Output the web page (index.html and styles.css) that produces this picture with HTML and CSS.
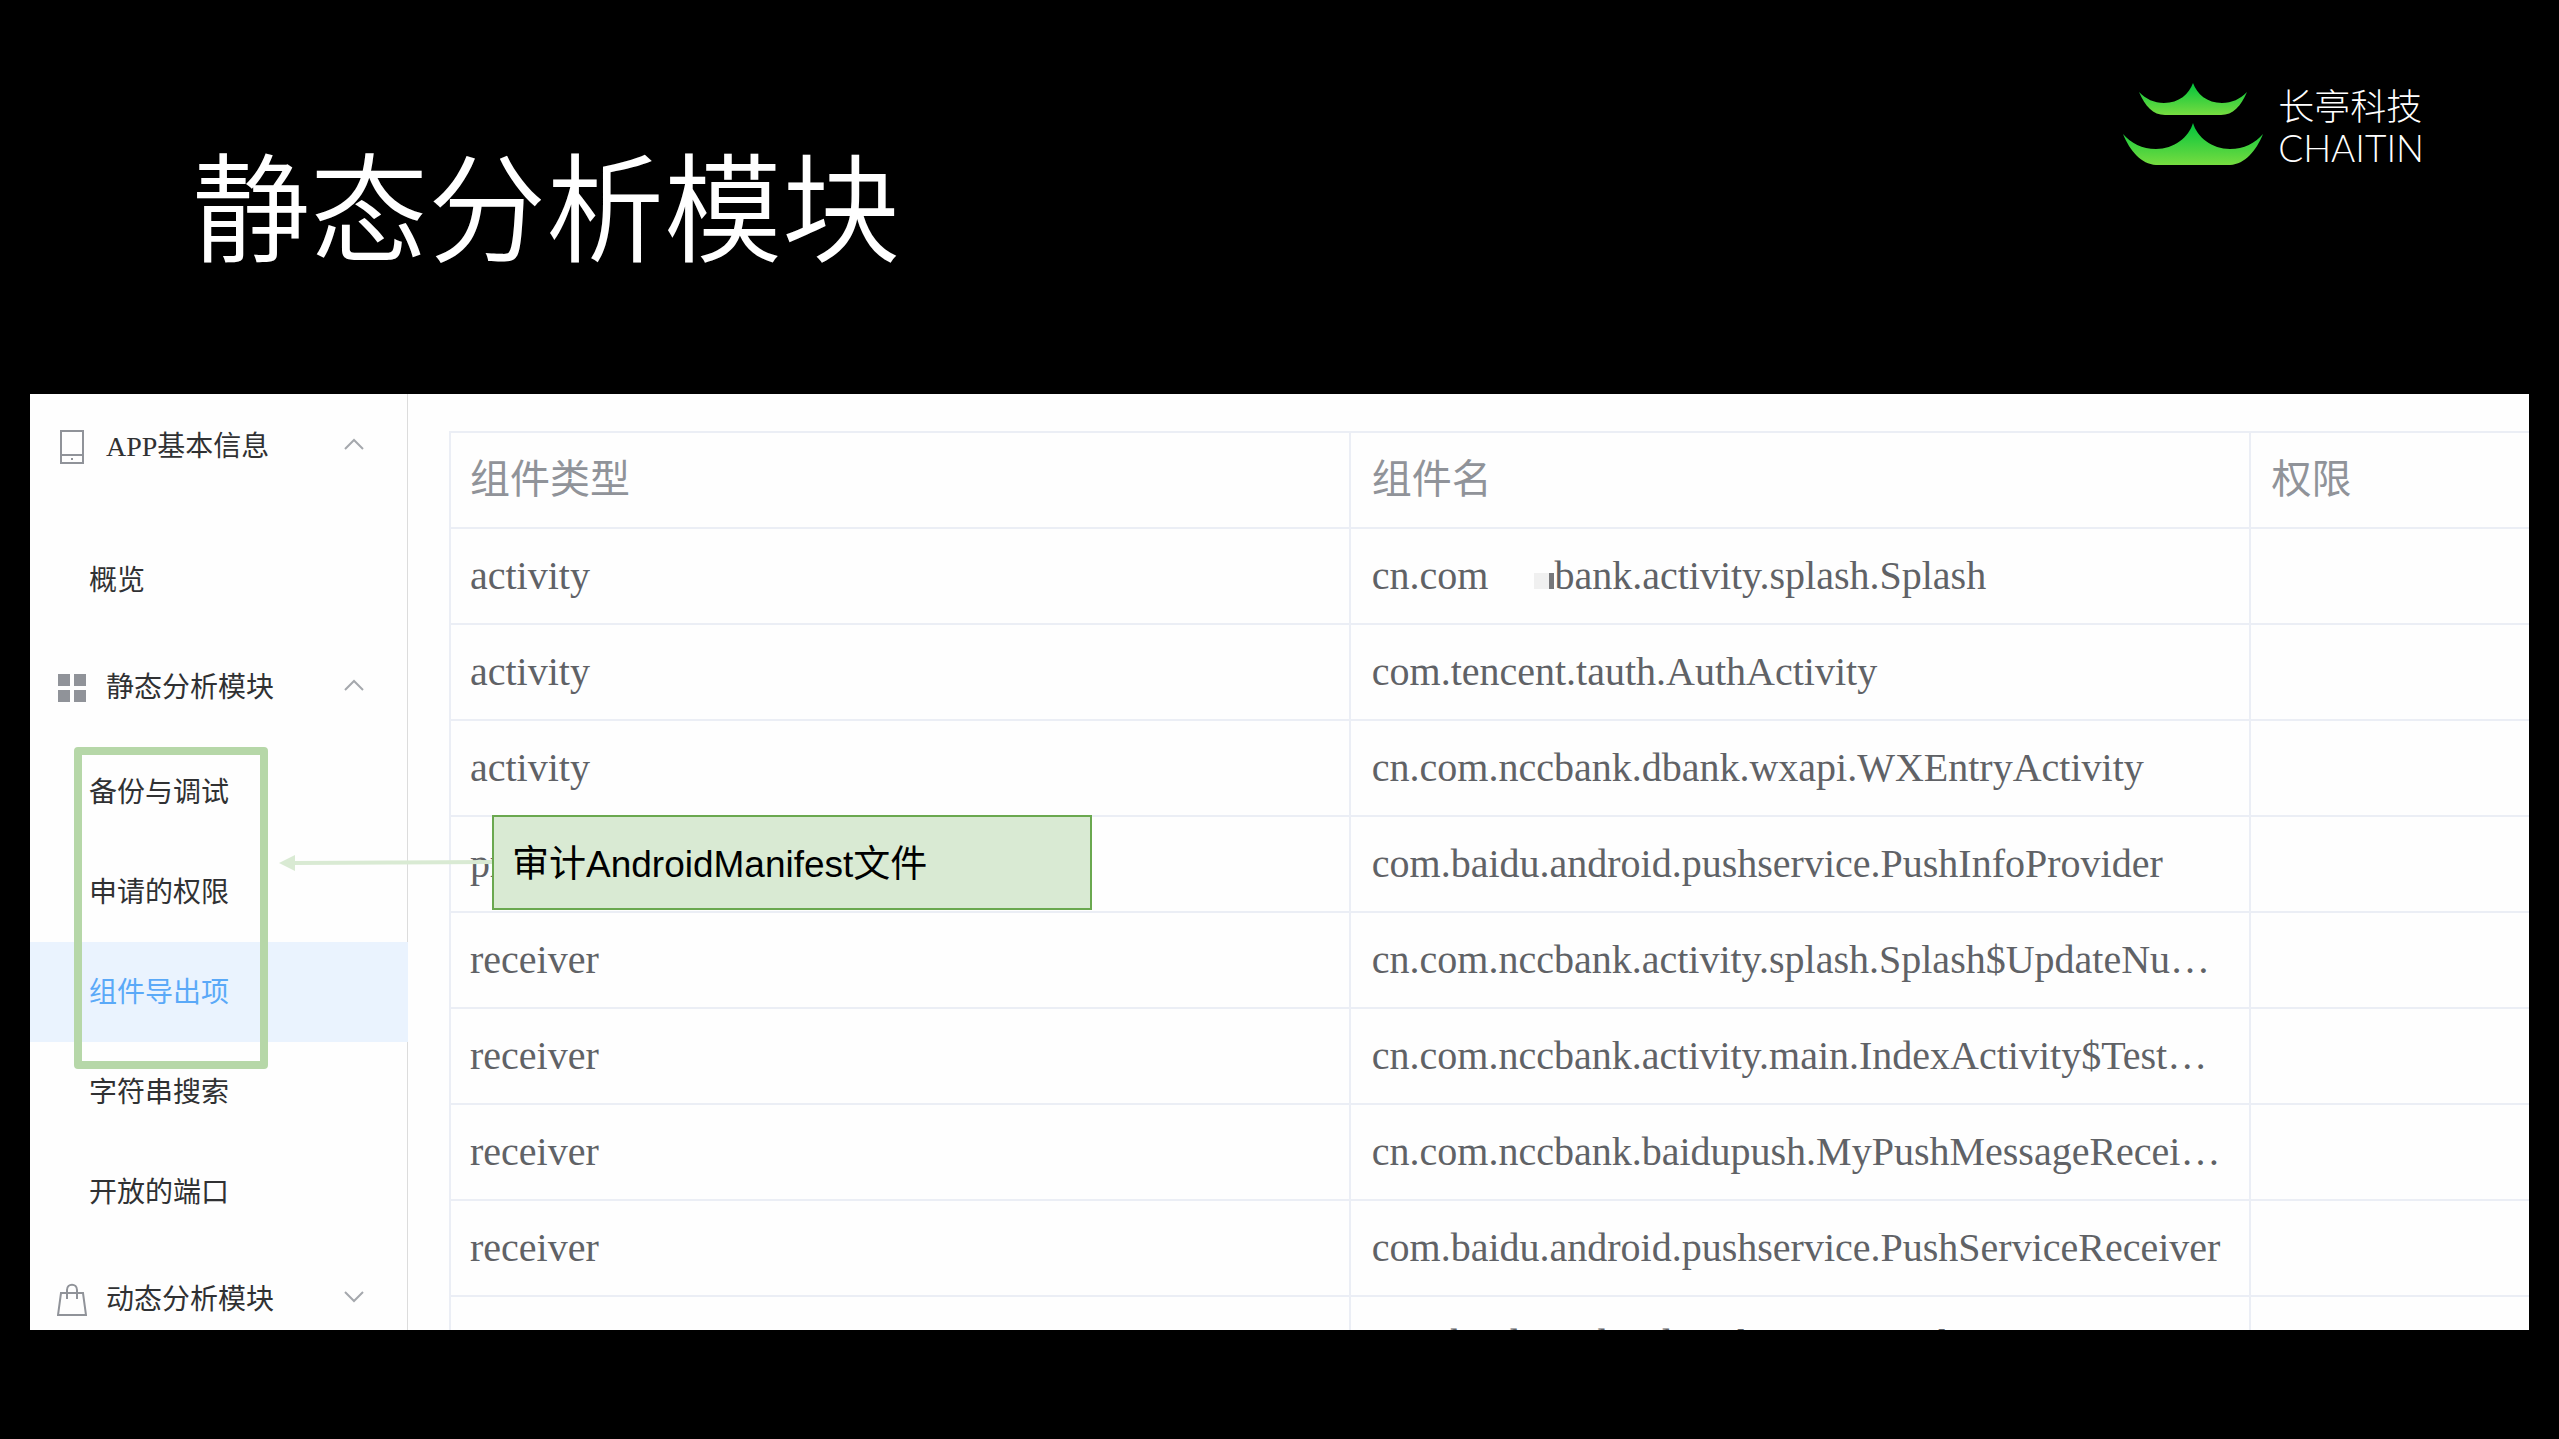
FILE: index.html
```html
<!DOCTYPE html>
<html lang="zh-CN">
<head>
    <meta charset="UTF-8">
    <meta name="viewport" content="width=device-width, initial-scale=1.0">
    <title>静态分析模块</title>
    <link rel="stylesheet" href="styles.css">
</head>
<body>
    <header>
        <h1>静态分析模块</h1>
        <div class="logo">
            <svg class="logo-mark" width="142" height="84" viewBox="0 0 142 84">
                <defs>
                    <linearGradient id="roof" x1="0" y1="0" x2="0" y2="1">
                        <stop offset="0" stop-color="#00c43c"/>
                        <stop offset="1" stop-color="#76dc40"/>
                    </linearGradient>
                </defs>
                <path fill="url(#roof)" d="M71 1C67 12 57 21 42 21C32 21 24 17 17 10C23 24 31 33 43 33H99C111 33 119 24 125 10C118 17 110 21 100 21C85 21 75 12 71 1Z"/>
                <path fill="url(#roof)" d="M71 41C67 55 52 67 34 67C20 67 9 61 1 52C8 69 19 82 34 83H108C123 82 134 69 141 52C133 61 122 67 108 67C90 67 75 55 71 41Z"/>
            </svg>
            <div class="logo-text">
                <span class="logo-cn">长亭科技</span>
                <span class="logo-en">CHAITIN</span>
            </div>
        </div>
    </header>

    <main class="panel">
        <nav class="sidebar">
            <button type="button" class="group first">
                <svg class="icon" width="30" height="36" viewBox="0 0 30 36">
                    <path d="M4 2H26V34H4ZM4 26H26M14 30H16"/>
                </svg>
                <span>APP基本信息</span>
                <svg class="chevron" width="20" height="12" viewBox="0 0 20 12"><path d="M1 11L10 2L19 11"/></svg>
            </button>
            <a class="item" href="#">概览</a>

            <button type="button" class="group">
                <svg class="icon" width="30" height="36" viewBox="0 0 30 36">
                    <path class="solid" d="M1 4H13V16H1ZM17 4H29V16H17ZM1 20H13V32H1ZM17 20H29V32H17Z"/>
                </svg>
                <span>静态分析模块</span>
                <svg class="chevron" width="20" height="12" viewBox="0 0 20 12"><path d="M1 11L10 2L19 11"/></svg>
            </button>
            <a class="item" href="#">备份与调试</a>
            <a class="item" href="#">申请的权限</a>
            <a class="item active" href="#">组件导出项</a>
            <a class="item" href="#">字符串搜索</a>
            <a class="item" href="#">开放的端口</a>

            <button type="button" class="group">
                <svg class="icon" width="30" height="36" viewBox="0 0 30 36">
                    <path d="M4 11H26L29 33H1ZM10 17V8C10 1 20 1 20 8V17"/>
                </svg>
                <span>动态分析模块</span>
                <svg class="chevron" width="20" height="12" viewBox="0 0 20 12"><path d="M1 1L10 10L19 1"/></svg>
            </button>
        </nav>

        <section class="content">
            <table>
                <thead>
                    <tr><th>组件类型</th><th>组件名</th><th>权限</th></tr>
                </thead>
                <tbody>
                    <tr><td>activity</td><td>cn.com<span class="smudge"></span>bank.activity.splash.Splash</td><td></td></tr>
                    <tr><td>activity</td><td>com.tencent.tauth.AuthActivity</td><td></td></tr>
                    <tr><td>activity</td><td>cn.com.nccbank.dbank.wxapi.WXEntryActivity</td><td></td></tr>
                    <tr><td>provider</td><td>com.baidu.android.pushservice.PushInfoProvider</td><td></td></tr>
                    <tr><td>receiver</td><td>cn.com.nccbank.activity.splash.Splash$UpdateNu…</td><td></td></tr>
                    <tr><td>receiver</td><td>cn.com.nccbank.activity.main.IndexActivity$Test…</td><td></td></tr>
                    <tr><td>receiver</td><td>cn.com.nccbank.baidupush.MyPushMessageRecei…</td><td></td></tr>
                    <tr><td>receiver</td><td>com.baidu.android.pushservice.PushServiceReceiver</td><td></td></tr>
                    <tr><td>receiver</td><td>com.baidu.android.pushservice.PushServiceReceiver</td><td></td></tr>
                </tbody>
            </table>
        </section>

        <!-- annotations over the panel -->
        <div class="frame"></div>
        <svg class="arrow" width="214" height="16" viewBox="0 0 214 16">
            <path d="M14 8L214 7" stroke="#d9ead3" stroke-width="4"/>
            <path d="M0 8L16 0V16Z" fill="#d9ead3"/>
        </svg>
        <div class="callout">审计AndroidManifest文件</div>
    </main>
</body>
</html>
```
FILE: styles.css
```css
* {
    box-sizing: border-box;
}

body {
    display: flex;
    flex-direction: column;
    height: 100vh;
    margin: 0;
    padding: 0 30px 109px;
    background-color: #000;
    font-family: "Liberation Serif", "Noto Sans CJK SC", serif;
}

header {
    display: flex;
    justify-content: space-between;
    align-items: flex-start;
    flex: none;
    height: 394px;
    padding: 82px 105px 0 162px;
    color: #fff;
}

h1 {
    margin: 34px 0 0;
    font-family: "Noto Sans CJK SC", sans-serif;
    font-size: 118px;
    font-weight: 350;
    line-height: 172px;
}

.logo {
    display: flex;
    gap: 14px;
}

.logo-text {
    display: flex;
    flex-direction: column;
    font-weight: 300;
}

.logo-cn {
    font-family: "Noto Sans CJK SC", sans-serif;
    font-size: 36px;
    line-height: 44px;
}

.logo-en {
    font-family: Lato, sans-serif;
    font-size: 37px;
    line-height: 44px;
}

.panel {
    position: relative;
    display: flex;
    flex: 1;
    min-height: 0;
    overflow: hidden;
    background-color: #fefefe;
}

.sidebar {
    flex: none;
    width: 378px;
    border-right: 1px solid #dcdcdc;
}

.group {
    display: flex;
    align-items: center;
    width: 100%;
    height: 112px;
    padding: 0 43px 2px 27px;
    border: none;
    background: none;
    color: #303133;
    font-family: inherit;
    font-size: 28px;
    text-align: left;
    cursor: pointer;
}

.group.first {
    height: 102px;
    margin-bottom: 34px;
}

.icon {
    margin: 6px 19px 0 0;
    fill: none;
    stroke: #909399;
    stroke-width: 2;
}

.icon .solid {
    fill: #909399;
    stroke: none;
}

.chevron {
    margin-left: auto;
    fill: none;
    stroke: #a5a8ad;
    stroke-width: 2;
}

.item {
    display: block;
    height: 100px;
    padding-left: 59px;
    color: #303133;
    font-size: 28px;
    line-height: 102px;
    text-decoration: none;
}

.item.active {
    margin-right: -1px;
    background-color: #eaf3fe;
    color: #5aa9f8;
}

.content {
    flex: 1;
    min-width: 0;
    padding: 37px 0 0 41px;
}

table {
    width: 100%;
    border-collapse: separate;
    border-spacing: 0;
    border-top: 2px solid #ebeef5;
    border-left: 2px solid #ebeef5;
    table-layout: fixed;
}

th,
td {
    height: 96px;
    padding: 0 21px;
    border-right: 2px solid #ebeef5;
    border-bottom: 2px solid #ebeef5;
    color: #606266;
    font-size: 40px;
    font-weight: 400;
    line-height: 56px;
    text-align: left;
    white-space: nowrap;
}

th {
    width: 43.3%;
    color: #909399;
}

th:first-child,
td:first-child {
    padding-left: 19px;
}

th:last-child {
    width: auto;
}

th:last-child,
td:last-child {
    border-right: none;
}

/* half-erased part of the package name */
.smudge {
    display: inline-block;
    width: 20px;
    height: 16px;
    margin-left: 46px;
    background: linear-gradient(to right, #f0f0f0 75%, #77787b 75%);
}

.frame {
    position: absolute;
    top: 353px;
    left: 44px;
    width: 194px;
    height: 322px;
    border: 8px solid #b6d7a8;
    border-radius: 4px;
}

.arrow {
    position: absolute;
    top: 461px;
    left: 249px;
}

.callout {
    position: absolute;
    top: 421px;
    left: 462px;
    width: 600px;
    height: 95px;
    padding-left: 18px;
    border: 2px solid #6aa84f;
    background-color: #d9ead3;
    color: #000;
    font-family: "Liberation Sans", "Noto Sans CJK SC", sans-serif;
    font-size: 37px;
    line-height: 95px;
}
```
